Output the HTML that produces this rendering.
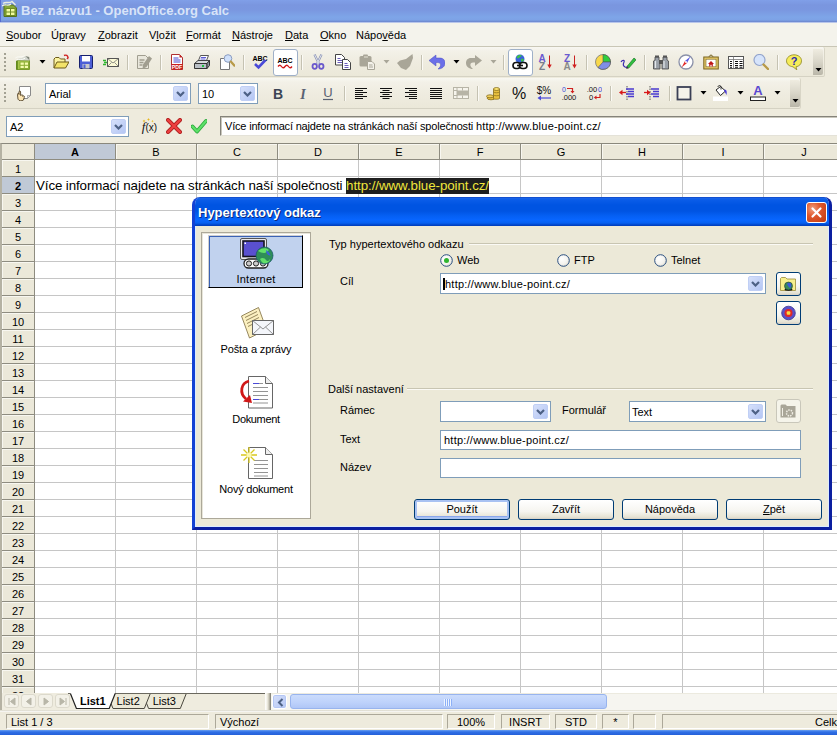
<!DOCTYPE html>
<html><head><meta charset="utf-8"><title>Bez názvu1 - OpenOffice.org Calc</title>
<style>
*{box-sizing:border-box;margin:0;padding:0}
html,body{width:837px;height:735px;overflow:hidden;background:#eeebdd;font-family:"Liberation Sans",sans-serif;font-size:11px;color:#000}
.a{position:absolute}
.t{position:absolute;white-space:nowrap;line-height:13px}
#title{left:0;top:0;width:837px;height:22px;background:linear-gradient(#809fe8 0,#7a96df 5px,#7a97e0 10px,#7ea5e8 17px,#7da2e6 20px,#6b84cc 22px)}
#title .t{left:21px;top:3px;font-size:13px;font-weight:bold;color:#d8e4f8;line-height:16px}
#menubar{left:0;top:22px;width:837px;height:24px;background:#f4f3ec;border-top:1px solid #b9c6ea}
#menubar .t{top:6px}#title:before{content:"";position:absolute;left:0;top:0;width:1px;height:22px;background:#566cd2}
u{text-decoration:underline}
.tb{background:linear-gradient(#f8f7f2 0,#f3f1e8 4px,#efece0 50%,#ebe8d9 100%);border-bottom:1px solid #d5d2c3;border-right:1px solid #d8d5c6;border-radius:0 2px 2px 0}
.ovf{background:linear-gradient(#efece0 0,#d8d5c8 50%,#b9b6a8 100%);border-radius:0 2px 2px 0}
.sep{width:1px;height:15px;background:#c5c2b2;box-shadow:1px 0 0 #fbfaf5}
.hdl{width:3px;height:19px;background:repeating-linear-gradient(180deg,#a3a193 0,#a3a193 2px,transparent 2px,transparent 4px);box-shadow:none}
.frm{background:#fff;border:1px solid #9fb0c8;border-radius:3px}
.combo{background:#fff;border:1px solid #7f9db9}
.cbtn{width:15px;background:linear-gradient(135deg,#d6e0fa,#b4c6f4);border:1px solid #c0cff5;border-radius:2px}
#finput{left:220px;top:116px;width:620px;height:20px;background:#fff;border:1px solid #85837a;border-bottom-color:#e4e2d8;box-shadow:inset 1px 1px 0 #c9c7bc}
#gridframe{left:0;top:143px;width:837px;height:567px;border-top:1px solid #8a887c;border-left:2px solid #8a887c;border-left-color:#b5b2a3}
#grid{left:2px;top:144px;width:835px;height:549px;overflow:hidden;background:#fff}
.ch{position:absolute;top:0;width:81px;height:16px;background:#ebe8d9;border-right:1px solid #8e8c80;border-bottom:1px solid #8e8c80;text-align:center;font-size:11px;line-height:17px;box-shadow:inset 1px 1px 0 #f8f7f0}
.rh{position:absolute;left:0;width:33px;height:17px;background:#ebe8d9;border-right:1px solid #8e8c80;border-bottom:1px solid #8e8c80;text-align:center;font-size:11px;line-height:19px;box-shadow:inset 1px 1px 0 #f8f7f0}
.ch.sel,.rh.sel{background:#c0c9d6;font-weight:bold;box-shadow:none}
#corner{left:0;top:0;width:33px;height:16px;background:#ebe8d9;border-right:1px solid #8e8c80;border-bottom:1px solid #8e8c80}
#cells{left:33px;top:16px;width:802px;height:533px;background:
 repeating-linear-gradient(90deg,transparent 0,transparent 80px,#c6c6c6 80px,#c6c6c6 81px),
 repeating-linear-gradient(180deg,transparent 0,transparent 16px,#c6c6c6 16px,#c6c6c6 17px),#fff}
#celltext{left:1px;top:18px;font-size:13.33px;line-height:16px;font-family:"Liberation Sans",sans-serif}
#celltext i{font-style:normal;letter-spacing:-0.105px}#celltext span{letter-spacing:-0.06px;background:#1e1e1e;color:#f0e63c;display:inline-block;height:16px}
#tabbar{left:2px;top:693px;width:264px;height:17px;background:#efecdf}
.navb{top:694px;width:15px;height:14px;border:1px solid #dcd9cc;border-radius:3px;background:#f3f1e8}
#split{left:265px;top:693px;width:6px;height:17px;background:linear-gradient(90deg,#fff 0,#f4f2e8 2px,#c8c5b6 4px,#77756a 6px)}
#hscroll{left:271px;top:693px;width:566px;height:17px;background:#f6f5f0;border-top:1px solid #eceadf}
#sbl{left:272px;top:694px;width:15px;height:15px;background:linear-gradient(135deg,#d6e0fa,#b4c6f4);border:1px solid #fff;border-radius:3px;box-shadow:0 0 0 1px #b4c6f4 inset}
#thumb{left:290px;top:694px;width:317px;height:15px;background:linear-gradient(#cbdcfc 0,#bdd1fb 60%,#b0c6f6 100%);border:1px solid #98b4ee;border-radius:3px}
.sf{top:714px;height:15px;padding-top:1px;border:1px solid;border-color:#aca899 #fff #fff #aca899;font-size:11px;line-height:13px;white-space:nowrap;overflow:hidden}
#bluebar{left:0;top:730px;width:837px;height:5px;background:linear-gradient(#6aa0f0 0,#2f6fe6 2px,#2560d8)}
#wline{left:0;top:710px;width:837px;height:2px;background:linear-gradient(#d8d5c6,#fff)}
#dlg{left:192px;top:197px;width:640px;height:333px;background:#ece9d8;border:3px solid #0c1fa0;border-left-color:#1442d4;border-top:none;border-radius:8px 8px 0 0;box-shadow:inset 1px 0 0 #dcecff,inset -1px 0 0 #dcecff,inset 0 -1px 0 #dcecff;overflow:hidden}
#dtitle{left:-3px;top:0;width:640px;height:29px;border-radius:7px 7px 0 0;background:linear-gradient(#0a3cb8 0,#1a64e8 1px,#0a5ce8 3px,#0054e2 8px,#0054e2 14px,#0560f4 19px,#0866ff 23px,#0660f0 26px,#0044c8 28px,#003cb8 29px)}
#dtt{left:6px;top:8px;font-size:13px;font-weight:bold;color:#fff;line-height:16px;text-shadow:1px 1px 0 #0a2a80}
#dclose{left:614px;top:5px;width:21px;height:21px;border:1px solid #fff;border-radius:3px;background:radial-gradient(circle at 30% 30%,#f0a080 0,#e0582c 40%,#c03a10 100%)}
#lpanel{left:201px;top:232px;width:110px;height:287px;background:#fff;border:1px solid #aca899;box-shadow:inset 1px 1px 0 #e8e6da}
#selitem{left:208px;top:235px;width:95px;height:53px;background:#c1d2ee;border:1px solid;border-color:#d0d0d0 #000 #000 #d0d0d0;box-shadow:inset 1px 1px 0 #3a62b4}
.gl{height:1px;background:#c8c5b2;box-shadow:0 1px 0 #fbfaf5}
.xbtn{border:1px solid #003c74;border-radius:3px;background:linear-gradient(#fff 0,#f6f5f0 60%,#e6e3d4 90%,#d6d0c5 100%)}
.xbtn.dis{border-color:#c9c7ba;background:#f5f4ea}
.url{letter-spacing:.23px}
.xbtn.dflt{box-shadow:inset 0 0 0 2px #a9c2f2,inset 0 -3px 0 #8aa6ec}

</style></head><body>
<div class="a" id="title"><svg class="a" style="left:2px;top:0px" width="16" height="17" viewBox="0 0 16 17"><path d="M2 5h9.500l3 3v8.500H2z" fill="#86a838" stroke="#55701c"/><path d="M1 3.500c3-2.500 6 .5 9-2l3.500 3.500" fill="none" stroke="#e8ece0" stroke-width="1.600"/><path d="M0 6c3-2.500 6 .5 9-2" fill="none" stroke="#f4f6f0" stroke-width="1.200"/><rect x="4" y="8.500" width="9" height="7" fill="#f2fca0" stroke="#6f8c24"/><path d="M4 12h9M8.500 8.500v7" stroke="#6f8c24"/></svg><div class="t">Bez názvu1 - OpenOffice.org Calc</div></div>
<div class="a" id="menubar">
<div class="t" style="left:6px"><u>S</u>oubor</div>
<div class="t" style="left:51px">Ú<u>p</u>ravy</div>
<div class="t" style="left:98px"><u>Z</u>obrazit</div>
<div class="t" style="left:149px">V<u>l</u>ožit</div>
<div class="t" style="left:186px"><u>F</u>ormát</div>
<div class="t" style="left:232px"><u>N</u>ástroje</div>
<div class="t" style="left:285px"><u>D</u>ata</div>
<div class="t" style="left:320px"><u>O</u>kno</div>
<div class="t" style="left:356px">Nápo<u>v</u>ěda</div>
</div>
<div class="a" style="left:0;top:46px;width:837px;height:1px;background:#c9c6b6"></div><div class="a tb" style="left:0;top:47px;width:825px;height:30px"></div>
<div class="a tb" style="left:0;top:78px;width:801px;height:31px"></div>
<div class="a ovf" style="left:813px;top:49px;width:10px;height:26px"></div>
<div class="a ovf" style="left:790px;top:80px;width:10px;height:27px"></div>
<svg class="a" style="left:815px;top:68px" width="7" height="4" viewBox="0 0 7 4"><path d="M0.500 0h6L3.500 3.500z" fill="#000"/></svg>
<svg class="a" style="left:792px;top:99px" width="7" height="4" viewBox="0 0 7 4"><path d="M0.500 0h6L3.500 3.500z" fill="#000"/></svg>
<div class="a hdl" style="left:4px;top:53px;width:2px;height:18px"></div>
<div class="a hdl" style="left:4px;top:84px;width:2px;height:18px"></div>
<div class="a frm" style="left:273px;top:49px;width:25px;height:27px"></div>
<div class="a frm" style="left:508px;top:49px;width:25px;height:27px"></div>
<svg class="a" style="left:15px;top:54px" width="16" height="16" viewBox="0 0 16 16"><path d="M1.500 6.500h13v9h-13z" fill="#a9c84e" stroke="#7a9a2c"/><path d="M2 6.500v9" stroke="#5f861c" stroke-width="1.600"/><path d="M1.500 6.300C4 2.500 7 5.500 10.500 2l4 4.500z" fill="#d4d7cf"/><path d="M10.500 2l4 4.500-.3-3.500z" fill="#7f857a"/><path d="M.5 4c3-2.500 5.500.5 9-2.500M1 6.300c3-2.500 5.500.5 9-2" fill="none" stroke="#fbfcf8" stroke-width="1"/><rect x="5" y="8" width="8.500" height="6.500" fill="#f4fcae" stroke="#8aac32"/><path d="M5 11.300h8.500M9.300 8v6.500" stroke="#8aac32"/></svg>
<svg class="a" style="left:53px;top:54px" width="16" height="16" viewBox="0 0 16 16"><path d="M11 1.5c2-1 4 0 4 2.5" fill="none" stroke="#d02020" stroke-width="1.4"/><path d="M13.3 4.5l1.8 1 .6-2.3z" fill="#d02020"/><path d="M1 14V5l1.5-1.5h3.5L7.5 5H12v3" fill="#fbf3a0" stroke="#6d5b1a"/><path d="M1 14l3-6h12l-3.5 6z" fill="#f3e36a" stroke="#6d5b1a"/></svg>
<svg class="a" style="left:78px;top:54px" width="16" height="16" viewBox="0 0 16 16"><rect x="1.5" y="1.5" width="13" height="13" rx="1" fill="#4d5fd6" stroke="#16206e"/><rect x="4" y="2" width="8" height="5.5" fill="#fff"/><rect x="4.5" y="10" width="7" height="4.5" fill="#c8c8c8"/><rect x="5.5" y="10.5" width="2" height="3.5" fill="#4d5fd6"/></svg>
<svg class="a" style="left:103px;top:54px" width="16" height="16" viewBox="0 0 16 16"><rect x="4.5" y="4.5" width="11" height="8" fill="#fdfbd8" stroke="#555"/><path d="M4.5 4.5l5.5 4.5 5.5-4.5M4.5 12.5l4-4M15.5 12.5l-4-4" fill="none" stroke="#777" stroke-width=".8"/><path d="M0 6.5h3M1 8.5h3M0 10.5h3" stroke="#2fb52f" stroke-width="1.4"/></svg>
<svg class="a" style="left:136px;top:54px" width="16" height="16" viewBox="0 0 16 16"><path d="M1.500 1.500h8l3 3v10h-11z" fill="#e9e7dc" stroke="#a19e90"/><path d="M3.500 6h5M3.500 8.500h4M3.500 11h3" stroke="#a19e90" stroke-width="1.300"/><path d="M13 2l3 2.500-5.500 8.500-4 2 .5-4.500z" fill="#a19e90"/></svg>
<svg class="a" style="left:169px;top:54px" width="16" height="16" viewBox="0 0 16 16"><path d="M2.5 .5h8l3 3v12h-11z" fill="#fff" stroke="#b03030"/><path d="M10.5.5v3h3z" fill="#c02020"/><path d="M4.5 4h5M4.5 6h7M4.5 8h7" stroke="#4a4ad0" stroke-width="1.1"/><rect x="2.5" y="10" width="11" height="5.5" fill="#c81e1e"/><text x="8" y="14.6" font-size="5.2" font-weight="bold" fill="#fff" text-anchor="middle" font-family="Liberation Sans,sans-serif">PDF</text></svg>
<svg class="a" style="left:194px;top:54px" width="16" height="16" viewBox="0 0 16 16"><path d="M4.500 6.500l2-5h8l-2 5z" fill="#fff" stroke="#555"/><path d="M7 3.500h5M6.500 5h5" stroke="#4a4ad0" stroke-width=".9"/><path d="M.5 9.500l3.500-3h11.500l-2.500 3z" fill="#d6d9dc" stroke="#444"/><path d="M.5 9.500h12.500v5H.5z" fill="#b9bfc5" stroke="#333"/><path d="M13 9.500l2.500-3v5l-2.500 3z" fill="#8e959c" stroke="#333"/><rect x="8" y="11" width="2" height="2" fill="#1fbf3f"/></svg>
<svg class="a" style="left:219px;top:54px" width="16" height="16" viewBox="0 0 16 16"><path d="M1.500 4.500h7l2 2v9h-9z" fill="#fff" stroke="#777"/><circle cx="9" cy="4.500" r="3.800" fill="#cfe0fa" stroke="#8a9cc0"/><path d="M11.800 7.500l3.700 4.200" stroke="#b89a48" stroke-width="2.200" stroke-linecap="round"/></svg>
<svg class="a" style="left:252px;top:54px" width="16" height="16" viewBox="0 0 16 16"><text x="8" y="6.500" font-size="7" font-weight="bold" text-anchor="middle" font-family="Liberation Sans,sans-serif">ABC</text><path d="M3 10l3.500 3.500 7-7.500" fill="none" stroke="#4a4ad8" stroke-width="2.600"/></svg>
<svg class="a" style="left:277px;top:54px" width="16" height="16" viewBox="0 0 16 16"><text x="8" y="8.500" font-size="7" font-weight="bold" text-anchor="middle" font-family="Liberation Sans,sans-serif">ABC</text><path d="M1 12.500q1.800-2.500 3.500 0t3.500 0 3.500 0 3.500 0" fill="none" stroke="#d01818" stroke-width="1.300"/></svg>
<svg class="a" style="left:310px;top:54px" width="16" height="16" viewBox="0 0 16 16"><path d="M4.500 .5L9 10M11.500 .5L7 10" stroke="#8a92b0" stroke-width="2.200"/><path d="M4.500 .5L9 10M11.500 .5L7 10" stroke="#dfe3f0" stroke-width="1"/><ellipse cx="4.700" cy="12.300" rx="2.200" ry="2.500" fill="none" stroke="#6a58cc" stroke-width="1.800"/><ellipse cx="11.300" cy="12.300" rx="2.200" ry="2.500" fill="none" stroke="#6a58cc" stroke-width="1.800"/></svg>
<svg class="a" style="left:335px;top:54px" width="16" height="16" viewBox="0 0 16 16"><path d="M.5 .5h6l3 3v7.500h-9z" fill="#fff" stroke="#444"/><path d="M2.500 4.500h3M2.500 6.500h5M2.500 8.500h5" stroke="#5a4ab0" stroke-width=".9"/><path d="M7.500 5.500h5l3 3v7h-8z" fill="#fff" stroke="#444"/><path d="M9.500 9.500h3M9.500 11.500h4M9.500 13.500h4" stroke="#5a4ab0" stroke-width=".9"/></svg>
<svg class="a" style="left:359px;top:54px" width="16" height="16" viewBox="0 0 16 16"><rect x=".5" y="2" width="12" height="10.500" rx="1.500" fill="#a9a698"/><rect x="4" y=".5" width="5" height="3" rx="1" fill="#a9a698"/><path d="M5 3h4" stroke="#e6e3d6"/><path d="M8.500 7.500h4.500l2.500 2.500v5.500h-7z" fill="#f4f2ea" stroke="#a9a698"/><path d="M10 11h3.500M10 13h4" stroke="#a9a698"/></svg>
<svg class="a" style="left:397px;top:54px" width="16" height="16" viewBox="0 0 16 16"><path d="M15.500 0L16 4 13 12 9 16 4 14 0 9 3 6.500 9 5Z" fill="#a9a698"/></svg>
<svg class="a" style="left:429px;top:54px" width="16" height="16" viewBox="0 0 16 16"><path d="M0 6.500L7 1V4H11C14.500 4 16 6.500 16 9 16 12.500 13 15 9 15 11 13.500 12 11.500 11.500 10 11 8.800 10 8.500 7 8.500V12Z" fill="#6b6fe8" stroke="#4a4cc0" stroke-width=".5"/></svg>
<svg class="a" style="left:466px;top:54px" width="16" height="16" viewBox="0 0 16 16"><path d="M16 6.500L9 1V4H5C1.500 4 0 6.500 0 9 0 12.500 3 15 7 15 5 13.500 4 11.500 4.500 10 5 8.800 6 8.500 9 8.500V12Z" fill="#a9a698"/></svg>
<svg class="a" style="left:512px;top:54px" width="16" height="16" viewBox="0 0 16 16"><circle cx="8" cy="5" r="4.500" fill="#3a64d8"/><path d="M4.500 3c1.500-2.500 4-2.500 5.500-1.500-1 1.500-2 1-3 2.500-1 1-2 0-2.500-1z" fill="#3ec04a"/><path d="M9 5c1-.5 2.500 0 3 1-.5 1.500-2 2-3 1.500z" fill="#3ec04a"/><rect x="1" y="8.500" width="7.500" height="6" rx="3" fill="#fff" stroke="#111" stroke-width="1.600"/><rect x="7.500" y="8.500" width="7.500" height="6" rx="3" fill="#fff" stroke="#111" stroke-width="1.600"/><path d="M5 11.500h6" stroke="#111" stroke-width="1.600"/><path d="M6.500 9.800l2 1.700-2 1.700M9.500 9.800l-2 1.700" fill="none" stroke="#111" stroke-width=".8"/></svg>
<svg class="a" style="left:537px;top:54px" width="16" height="16" viewBox="0 0 16 16"><text x="5" y="8" font-size="10" font-weight="bold" fill="#6a5ad0" text-anchor="middle" font-family="Liberation Sans,sans-serif">A</text><text x="5" y="16" font-size="10" font-weight="bold" fill="#7a7f8c" text-anchor="middle" font-family="Liberation Sans,sans-serif">Z</text><path d="M12.500 1.500v10" stroke="#c82020" stroke-width="1"/><path d="M10.300 10.500h4.400l-2.200 4z" fill="#d02020"/></svg>
<svg class="a" style="left:562px;top:54px" width="16" height="16" viewBox="0 0 16 16"><text x="5" y="8" font-size="10" font-weight="bold" fill="#6a5ad0" text-anchor="middle" font-family="Liberation Sans,sans-serif">Z</text><text x="5" y="16" font-size="10" font-weight="bold" fill="#8a8a8a" text-anchor="middle" font-family="Liberation Sans,sans-serif">A</text><path d="M12.500 1.500v10" stroke="#c82020" stroke-width="1"/><path d="M10.300 10.500h4.400l-2.200 4z" fill="#d02020"/></svg>
<svg class="a" style="left:595px;top:54px" width="16" height="16" viewBox="0 0 16 16"><circle cx="8" cy="8" r="7.500" fill="#f8d84a" stroke="#777" stroke-width=".8"/><path d="M8 8V.5A7.500 7.500 0 0 1 15.500 8z" fill="#2fcf3f" stroke="#555" stroke-width=".6"/><path d="M8 8h7.500A7.500 7.500 0 0 1 3 13.500z" fill="#7f8ee8" stroke="#555" stroke-width=".6"/></svg>
<svg class="a" style="left:620px;top:54px" width="16" height="16" viewBox="0 0 16 16"><path d="M1 8c1.500-2.500 4-2 3 0s-1 4 1 5 3-.5 3.500-1.500" fill="none" stroke="#3a2ab0" stroke-width="1.200"/><path d="M7 12.500L14 4l2 1.800-7.200 8.200z" fill="#2fbf3f" stroke="#1d7a2a" stroke-width=".7"/><path d="M7 12.500l-.8 2.500 2.600-.8z" fill="#333"/></svg>
<svg class="a" style="left:653px;top:54px" width="16" height="16" viewBox="0 0 16 16"><path d="M2 3h4v3l1 1v8H.5V7L2 6z" fill="#9aa0a8" stroke="#444" stroke-width=".8"/><path d="M10 3h4v3l1.500 1v8H9V7l1-1z" fill="#9aa0a8" stroke="#444" stroke-width=".8"/><rect x="6" y="6" width="4" height="4" fill="#555"/><path d="M2.500 7v7M11 7v7" stroke="#e4e8ec" stroke-width="1.200"/><rect x="2" y="1.500" width="4" height="2" fill="#555"/><rect x="10" y="1.500" width="4" height="2" fill="#555"/></svg>
<svg class="a" style="left:678px;top:54px" width="16" height="16" viewBox="0 0 16 16"><circle cx="8" cy="8" r="7" fill="#fff" stroke="#8a90a8" stroke-width="1.300"/><path d="M12.500 2.500L9 9 7 7z" fill="#5a5ae0"/><path d="M3.500 13.500L7 7l2 2z" fill="#e02828"/><circle cx="8" cy="8" r="1" fill="#fff"/></svg>
<svg class="a" style="left:703px;top:54px" width="16" height="16" viewBox="0 0 16 16"><path d="M5.500 3L8 .8 10.500 3" fill="none" stroke="#6d5b1a"/><rect x=".8" y="3" width="14.500" height="12" fill="#e2c666" stroke="#7a6420"/><rect x="3" y="5.200" width="10" height="7.600" fill="#fff" stroke="#7a6420" stroke-width=".6"/><path d="M5 10l3-3 3 3z" fill="#c01818"/><rect x="6.200" y="10" width="3.600" height="2.500" fill="#c01818"/><rect x="7.400" y="10.800" width="1.200" height="1.700" fill="#fff"/></svg>
<svg class="a" style="left:728px;top:54px" width="16" height="16" viewBox="0 0 16 16"><rect x=".5" y="2.500" width="15" height="12" fill="#fff" stroke="#555"/><path d="M.5 5.500h15M5.500 2.500v12" stroke="#777" stroke-width=".8"/><path d="M2 7.500h2M2 9.500h2M2 11.500h2M2 13.200h2M7 7.500h3M7 9.500h3M7 11.500h3M7 13.200h3M11.500 7.500h3M11.500 9.500h3M11.500 11.500h3M11.500 13.200h3" stroke="#111" stroke-width="1.100"/></svg>
<svg class="a" style="left:753px;top:54px" width="16" height="16" viewBox="0 0 16 16"><circle cx="6.500" cy="6" r="5.500" fill="#d6e4fb" stroke="#93a4cc" stroke-width="1.200"/><path d="M10.500 10.500l4.500 4.500" stroke="#b89a48" stroke-width="2.400" stroke-linecap="round"/></svg>
<svg class="a" style="left:786px;top:54px" width="16" height="16" viewBox="0 0 16 16"><path d="M8 .8c4.200 0 7.500 2.500 7.500 6s-2.500 5.500-5.500 6l.8 3-3.800-3C3 12.300.5 10 .5 6.800S3.800.8 8 .8z" fill="#f6ec5a" stroke="#8a8420" stroke-width=".8"/><text x="8" y="11" font-size="11" font-weight="bold" fill="#2a2ab0" text-anchor="middle" font-family="Liberation Sans,sans-serif">?</text></svg>
<div class="a sep" style="left:127px;top:55px"></div>
<div class="a sep" style="left:160px;top:55px"></div>
<div class="a sep" style="left:243px;top:55px"></div>
<div class="a sep" style="left:301px;top:55px"></div>
<div class="a sep" style="left:421px;top:55px"></div>
<div class="a sep" style="left:503px;top:55px"></div>
<div class="a sep" style="left:586px;top:55px"></div>
<div class="a sep" style="left:644px;top:55px"></div>
<div class="a sep" style="left:777px;top:55px"></div>
<svg class="a" style="left:38.5px;top:60px" width="7" height="4" viewBox="0 0 7 4"><path d="M0.500 0h6L3.500 3.500z" fill="#000"/></svg>
<svg class="a" style="left:382.5px;top:60px" width="7" height="4" viewBox="0 0 7 4"><path d="M0.500 0h6L3.500 3.500z" fill="#a9a698"/></svg>
<svg class="a" style="left:452.5px;top:60px" width="7" height="4" viewBox="0 0 7 4"><path d="M0.500 0h6L3.500 3.500z" fill="#000"/></svg>
<svg class="a" style="left:489.5px;top:60px" width="7" height="4" viewBox="0 0 7 4"><path d="M0.500 0h6L3.500 3.500z" fill="#a9a698"/></svg>
<svg class="a" style="left:16px;top:85px" width="16" height="16" viewBox="0 0 16 16"><path d="M3.500 1.500h11v9l-3 3h-8z" fill="#fff" stroke="#8a8a8a"/><path d="M14.500 10.500h-3v3z" fill="#e4e4e4" stroke="#8a8a8a" stroke-width=".6"/><path d="M1.500 9.500c0-1.600 1.500-1.600 1.500 0V7c0-1.400 1.600-1.400 1.600 0v3.500l.9-.5c1-.6 1.800.4 1.100 1.300l.9-.3c1-.2 1.500.9.700 1.600L7.500 15c-1.500 1.300-4.500 1-5.500-.8z" fill="#fde6b4" stroke="#3a2a10" stroke-width=".8"/></svg>
<svg class="a" style="left:270px;top:85px" width="16" height="16" viewBox="0 0 16 16"><text x="8" y="13.500" font-size="14" font-weight="bold" fill="#3c4454" text-anchor="middle" font-family="Liberation Sans,sans-serif">B</text></svg>
<svg class="a" style="left:295px;top:85px" width="16" height="16" viewBox="0 0 16 16"><text x="8" y="13.500" font-size="14" font-style="italic" font-weight="bold" fill="#5a6272" text-anchor="middle" font-family="Liberation Serif,serif">I</text></svg>
<svg class="a" style="left:320px;top:85px" width="16" height="16" viewBox="0 0 16 16"><text x="8" y="12" font-size="13" fill="#5a6272" text-anchor="middle" font-family="Liberation Sans,sans-serif">U</text><path d="M3 14.500h10" stroke="#5a6272" stroke-width="1.200"/></svg>
<svg class="a" style="left:353px;top:85px" width="16" height="16" viewBox="0 0 16 16"><path d="M2 3.5h12M2 5.5h8M2 7.5h12M2 9.5h8M2 11.5h12M2 13.5h8" stroke="#111" stroke-width="1"/></svg>
<svg class="a" style="left:378px;top:85px" width="16" height="16" viewBox="0 0 16 16"><path d="M2.0 3.5h12M4.5 5.5h7M2.0 7.5h12M4.5 9.5h7M2.0 11.5h12M4.5 13.5h7" stroke="#111" stroke-width="1"/></svg>
<svg class="a" style="left:403px;top:85px" width="16" height="16" viewBox="0 0 16 16"><path d="M2 3.5h12M6 5.5h8M2 7.5h12M6 9.5h8M2 11.5h12M6 13.5h8" stroke="#111" stroke-width="1"/></svg>
<svg class="a" style="left:428px;top:85px" width="16" height="16" viewBox="0 0 16 16"><path d="M2 3.5h12M2 5.5h12M2 7.5h12M2 9.5h12M2 11.5h12M2 13.5h12" stroke="#111" stroke-width="1"/></svg>
<svg class="a" style="left:453px;top:85px" width="16" height="16" viewBox="0 0 16 16"><rect x=".5" y="2.500" width="15" height="11" fill="#f6f4ec" stroke="#b7b4a6"/><rect x="4" y="5.500" width="11" height="5" fill="#b7b4a6"/><path d="M4 2.500v11M.5 5.500h4M.5 10.500h4M9.500 2.500v3M9.500 10.500v3" stroke="#b7b4a6"/></svg>
<svg class="a" style="left:486px;top:85px" width="16" height="16" viewBox="0 0 16 16"><ellipse cx="5" cy="13" rx="4" ry="1.800" fill="#e8c040" stroke="#7a6010" stroke-width=".7"/><ellipse cx="4" cy="11.300" rx="3.500" ry="1.500" fill="#f0d060" stroke="#7a6010" stroke-width=".7"/><path d="M7.500 4v9.500c0 1 5.500 1 6 0V4z" fill="#e8c040" stroke="#7a6010" stroke-width=".7"/><ellipse cx="10.500" cy="4" rx="3" ry="1.500" fill="#f8e070" stroke="#7a6010" stroke-width=".7"/><path d="M7.500 7c1 1 5 1 6 0M7.500 10c1 1 5 1 6 0" fill="none" stroke="#7a6010" stroke-width=".6"/></svg>
<svg class="a" style="left:511px;top:85px" width="16" height="16" viewBox="0 0 16 16"><text x="8" y="14" font-size="16" fill="#111" text-anchor="middle" font-family="Liberation Sans,sans-serif">%</text></svg>
<svg class="a" style="left:536px;top:85px" width="16" height="16" viewBox="0 0 16 16"><text x="8" y="8.500" font-size="10" fill="#111" text-anchor="middle" font-family="Liberation Sans,sans-serif">$%</text><path d="M4 13h11" stroke="#4a4ad8" stroke-width="1.200"/><path d="M1.500 13l3.500-2.500v5z" fill="#4a4ad8"/></svg>
<svg class="a" style="left:561px;top:85px" width="16" height="16" viewBox="0 0 16 16"><text x="3" y="6.500" font-size="7" fill="#3a4ad8" text-anchor="middle" font-family="Liberation Sans,sans-serif">0</text><path d="M6 3.500h5.500v3" fill="none" stroke="#d02020" stroke-width="1.200"/><path d="M9.500 6h4l-2 2.500z" fill="#d02020"/><text x="8" y="15" font-size="7.500" fill="#111" text-anchor="middle" font-family="Liberation Sans,sans-serif">.000</text></svg>
<svg class="a" style="left:586px;top:85px" width="16" height="16" viewBox="0 0 16 16"><text x="6" y="6.500" font-size="7.500" fill="#111" text-anchor="middle" font-family="Liberation Sans,sans-serif">.00</text><text x="14" y="6.500" font-size="7.500" fill="#3a4ad8" text-anchor="middle" font-family="Liberation Sans,sans-serif">0</text><text x="5" y="15" font-size="7.500" fill="#111" text-anchor="middle" font-family="Liberation Sans,sans-serif">0</text><path d="M14 9v3.500h-4" fill="none" stroke="#d02020" stroke-width="1.200"/><path d="M10.500 10.500v4l-2.700-2z" fill="#d02020"/></svg>
<svg class="a" style="left:619px;top:85px" width="16" height="16" viewBox="0 0 16 16"><path d="M8 1v14" stroke="#333" stroke-width=".8" stroke-dasharray="1.500 1"/><path d="M7 4h8M9 6.500h6M7 9h8M9 11.500h6" stroke="#4a3ad0" stroke-width="1.400"/><path d="M2 7.500h5" stroke="#d81818" stroke-width="1.300"/><path d="M0 7.500l3.500-2.800v5.600z" fill="#d81818"/></svg>
<svg class="a" style="left:644px;top:85px" width="16" height="16" viewBox="0 0 16 16"><path d="M6 1v14" stroke="#333" stroke-width=".8" stroke-dasharray="1.500 1"/><path d="M7 4h8M9 6.500h6M7 9h8M9 11.500h6" stroke="#4a3ad0" stroke-width="1.400"/><path d="M0 7.500h4" stroke="#d81818" stroke-width="1.300"/><path d="M6.500 7.500L3 4.700v5.600z" fill="#d81818"/></svg>
<svg class="a" style="left:676px;top:85px" width="16" height="16" viewBox="0 0 16 16"><rect x="1.500" y="2" width="13" height="12.500" fill="#f4f2ea" stroke="#3a3f55" stroke-width="1.800"/></svg>
<svg class="a" style="left:713px;top:85px" width="16" height="16" viewBox="0 0 16 16"><rect x="0" y="11.500" width="15" height="4.500" fill="#fff"/><path d="M3 5l4.500-3.500 5 4.500-5 4.500z" fill="#fff" stroke="#222" stroke-width="1"/><path d="M5 2c0-2 3-2 3 0v2.500" fill="none" stroke="#222" stroke-width=".9"/><path d="M11.500 4.500c2.500 0 2.500 3 2 5.500-1-1.500-1.500-3-2.500-4.500z" fill="#4a3ad8"/></svg>
<svg class="a" style="left:750px;top:85px" width="16" height="16" viewBox="0 0 16 16"><text x="8" y="10" font-size="13" font-weight="bold" fill="#5a48d0" text-anchor="middle" font-family="Liberation Sans,sans-serif">A</text><rect x=".5" y="12" width="15" height="3.500" fill="#fff" stroke="#222"/></svg>
<div class="a sep" style="left:344px;top:86px"></div>
<div class="a sep" style="left:477px;top:86px"></div>
<div class="a sep" style="left:610px;top:86px"></div>
<div class="a sep" style="left:669px;top:86px"></div>
<svg class="a" style="left:699.5px;top:91px" width="7" height="4" viewBox="0 0 7 4"><path d="M0.500 0h6L3.500 3.500z" fill="#000"/></svg>
<svg class="a" style="left:736.5px;top:91px" width="7" height="4" viewBox="0 0 7 4"><path d="M0.500 0h6L3.500 3.500z" fill="#000"/></svg>
<svg class="a" style="left:773.5px;top:91px" width="7" height="4" viewBox="0 0 7 4"><path d="M0.500 0h6L3.500 3.500z" fill="#000"/></svg>
<div class="a combo" style="left:45px;top:83px;width:146px;height:21px"><div class="t" style="left:3px;top:4px">Arial</div><div class="a cbtn" style="right:2px;top:2px;height:15px"><svg width="9" height="6" viewBox="0 0 9 6" style="position:absolute;left:2px;top:4px"><path d="M1 1l3.500 3.500L8 1" fill="none" stroke="#4d6185" stroke-width="2.200"/></svg></div></div>
<div class="a combo" style="left:198px;top:83px;width:60px;height:21px"><div class="t" style="left:3px;top:4px">10</div><div class="a cbtn" style="right:2px;top:2px;height:15px"><svg width="9" height="6" viewBox="0 0 9 6" style="position:absolute;left:2px;top:4px"><path d="M1 1l3.500 3.500L8 1" fill="none" stroke="#4d6185" stroke-width="2.200"/></svg></div></div>
<div class="a combo" style="left:6px;top:116px;width:123px;height:21px"><div class="t" style="left:3px;top:4px">A2</div><div class="a cbtn" style="right:2px;top:2px;height:15px"><svg width="9" height="6" viewBox="0 0 9 6" style="position:absolute;left:2px;top:4px"><path d="M1 1l3.500 3.500L8 1" fill="none" stroke="#4d6185" stroke-width="2.200"/></svg></div></div>
<svg class="a" style="left:141px;top:118px" width="16" height="16" viewBox="0 0 16 16"><text x="8.500" y="13" font-size="10" fill="#111" text-anchor="middle" font-family="Liberation Sans,sans-serif"><tspan font-style="italic" font-size="13" font-family="Liberation Serif,serif">f</tspan>(x)</text><path d="M3 1.500l.5 1 1 .5-1 .5-.5 1-.5-1-1-.5 1-.5zM7.500 0l.5 1 1 .5-1 .5-.5 1-.5-1-1-.5 1-.5zM11.500 2l.4.800.8.400-.8.400-.4.800-.4-.8-.8-.4.800-.4z" fill="#e8b820"/></svg>
<svg class="a" style="left:166px;top:118px" width="16" height="16" viewBox="0 0 16 16"><path d="M2 2l12 12M14 2L2 14" stroke="#b02020" stroke-width="4" stroke-linecap="round"/><path d="M2 2l12 12M14 2L2 14" stroke="#ee4040" stroke-width="2.400" stroke-linecap="round"/></svg>
<svg class="a" style="left:191px;top:118px" width="16" height="16" viewBox="0 0 16 16"><path d="M1.500 8.500l4.500 5 9-10.500" fill="none" stroke="#2aa83a" stroke-width="3.800" stroke-linejoin="round" stroke-linecap="round"/><path d="M1.500 8.500l4.500 5 9-10.500" fill="none" stroke="#5ce068" stroke-width="2.200" stroke-linejoin="round" stroke-linecap="round"/></svg>
<div class="a" id="finput"><div class="t" style="left:4px;top:3px"><span style="letter-spacing:-.18px">Více informací najdete na stránkách naší společnosti </span><span class="url">http://www.blue-point.cz/</span></div></div>
<div class="a" id="gridframe"></div><div class="a" id="grid">
<div class="ch sel" style="left:33px">A</div>
<div class="ch" style="left:114px">B</div>
<div class="ch" style="left:195px">C</div>
<div class="ch" style="left:276px">D</div>
<div class="ch" style="left:357px">E</div>
<div class="ch" style="left:438px">F</div>
<div class="ch" style="left:519px">G</div>
<div class="ch" style="left:600px">H</div>
<div class="ch" style="left:681px">I</div>
<div class="ch" style="left:762px">J</div>
<div class="rh" style="top:16px">1</div>
<div class="rh sel" style="top:33px">2</div>
<div class="rh" style="top:50px">3</div>
<div class="rh" style="top:67px">4</div>
<div class="rh" style="top:84px">5</div>
<div class="rh" style="top:101px">6</div>
<div class="rh" style="top:118px">7</div>
<div class="rh" style="top:135px">8</div>
<div class="rh" style="top:152px">9</div>
<div class="rh" style="top:169px">10</div>
<div class="rh" style="top:186px">11</div>
<div class="rh" style="top:203px">12</div>
<div class="rh" style="top:220px">13</div>
<div class="rh" style="top:237px">14</div>
<div class="rh" style="top:254px">15</div>
<div class="rh" style="top:271px">16</div>
<div class="rh" style="top:288px">17</div>
<div class="rh" style="top:305px">18</div>
<div class="rh" style="top:322px">19</div>
<div class="rh" style="top:339px">20</div>
<div class="rh" style="top:356px">21</div>
<div class="rh" style="top:373px">22</div>
<div class="rh" style="top:390px">23</div>
<div class="rh" style="top:407px">24</div>
<div class="rh" style="top:424px">25</div>
<div class="rh" style="top:441px">26</div>
<div class="rh" style="top:458px">27</div>
<div class="rh" style="top:475px">28</div>
<div class="rh" style="top:492px">29</div>
<div class="rh" style="top:509px">30</div>
<div class="rh" style="top:526px">31</div>
<div class="rh" style="top:543px">32</div>
<div class="a" id="corner"></div>
<div class="a" id="cells"><div class="t" id="celltext"><i>Více informací najdete na stránkách naší společnosti </i><span>http://www.blue-point.cz/</span></div></div>
</div>
<div class="a" id="tabbar"></div>
<div class="a navb" style="left:4px"><svg width="12" height="11" viewBox="0 0 12 11" style="position:absolute;left:1px;top:1px"><path d="M3 2v7M9 2L4.500 5.500 9 9z" fill="#b8b6a8" stroke="#b8b6a8" stroke-width="1"/></svg></div>
<div class="a navb" style="left:21px"><svg width="12" height="11" viewBox="0 0 12 11" style="position:absolute;left:1px;top:1px"><path d="M8 2L3.500 5.500 8 9z" fill="#b8b6a8" stroke="#b8b6a8" stroke-width="1"/></svg></div>
<div class="a navb" style="left:38px"><svg width="12" height="11" viewBox="0 0 12 11" style="position:absolute;left:1px;top:1px"><path d="M4 2l4.500 3.500L4 9z" fill="#b8b6a8" stroke="#b8b6a8" stroke-width="1"/></svg></div>
<div class="a navb" style="left:55px"><svg width="12" height="11" viewBox="0 0 12 11" style="position:absolute;left:1px;top:1px"><path d="M9 2v7M3 2l4.500 3.500L3 9z" fill="#b8b6a8" stroke="#b8b6a8" stroke-width="1"/></svg></div>
<svg class="a" style="left:68px;top:693px" width="200" height="17" viewBox="0 0 200 17">
<path d="M74.600 0.500l6 15h31.700l6-15z" fill="#ece9d8" stroke="#4a483f" stroke-width="1"/>
<path d="M39 0.500l6 15h31.300l6-15z" fill="#ece9d8" stroke="#4a483f" stroke-width="1"/>
<path d="M0 0.500h2.400M47.200 0.500h153" fill="none" stroke="#6a685e" stroke-width="1"/>
<path d="M2.400 0l6 15.500h32.800l6-15.500z" fill="#fff"/>
<path d="M2.400 0.500l6 15h32.800l6-15" fill="none" stroke="#222" stroke-width="1.200"/>
<text x="24.800" y="12.400" font-size="11" font-weight="bold" text-anchor="middle" font-family="Liberation Sans,sans-serif">List1</text>
<text x="60.200" y="12.400" font-size="11" text-anchor="middle" font-family="Liberation Sans,sans-serif">List2</text>
<text x="96.300" y="12.400" font-size="11" text-anchor="middle" font-family="Liberation Sans,sans-serif">List3</text>
</svg>
<div class="a" id="split"></div>
<div class="a" id="hscroll"></div>
<div class="a" id="sbl"><svg width="9" height="9" viewBox="0 0 9 9" style="position:absolute;left:3px;top:3px"><path d="M6.500 1L3 4.500 6.500 8" fill="none" stroke="#4d6185" stroke-width="2"/></svg></div>
<div class="a" id="thumb"><div class="a" style="left:153px;top:4px;width:8px;height:7px;background:repeating-linear-gradient(90deg,#eef4fe 0,#eef4fe 1px,#8cb0f8 1px,#8cb0f8 2px)"></div></div>
<div class="a sf" style="left:6px;width:203px;padding-left:4px;">List 1 / 3</div>
<div class="a sf" style="left:215px;width:228px;padding-left:4px;">Výchozí</div>
<div class="a sf" style="left:447px;width:48px;text-align:center;">100%</div>
<div class="a sf" style="left:501px;width:49px;text-align:center;">INSRT</div>
<div class="a sf" style="left:555px;width:42px;text-align:center;">STD</div>
<div class="a sf" style="left:602px;width:27px;text-align:center;">*</div>
<div class="a sf" style="left:633px;width:23px;padding-left:4px;"></div>
<div class="a sf" style="left:662px;width:180px;text-align:left;padding-left:152px">Celkem</div>
<div class="a" id="bluebar"></div><div class="a" id="wline"></div>
<div class="a" id="dlg">
<div class="a" id="dtitle"><div class="t" id="dtt">Hypertextový odkaz</div><div class="a" id="dclose"><svg width="19" height="19" viewBox="0 0 19 19" style="position:absolute;left:0;top:0"><path d="M5.500 5.500l8 8M13.500 5.500l-8 8" stroke="#fff" stroke-width="2.200" stroke-linecap="round"/></svg></div></div>
</div>
<div class="a" id="lpanel"></div>
<div class="a" id="selitem"></div>
<svg class="a" style="left:238px;top:237px" width="36" height="33" viewBox="0 0 36 33">
<rect x="2.500" y="1.500" width="26" height="21" rx="1.500" fill="#e9e9ee" stroke="#555"/>
<rect x="5" y="4" width="21" height="15.500" fill="#5a50d0" stroke="#15131f" stroke-width="1.600"/>
<rect x="6.500" y="5.500" width="1.500" height="1.500" fill="#fff"/>
<rect x="6" y="22" width="24" height="9" rx="4.500" fill="#fff" stroke="#222" stroke-width="1.300"/>
<circle cx="11" cy="26.500" r="2.600" fill="#ccc" stroke="#222"/><circle cx="18" cy="26.500" r="2.600" fill="#ccc" stroke="#222"/><circle cx="25" cy="26.500" r="2.600" fill="#ccc" stroke="#222"/>
<circle cx="26.500" cy="18.500" r="8.500" fill="#2f8e58" stroke="#1c5a6a" stroke-width=".8"/>
<path d="M20 14c3-3 8-4 11-1-2 1-3 3-5 3s-4-1-6-2zM22 22c2-2 5-1 6 1s3 1 4-1c0 3-4 5-7 4-1-1-2-2-3-4z" fill="#63e06a"/>
<path d="M28 13c2 1 4 3 4.500 6-1.500-1-3-1-4-3z" fill="#3a64d8"/>
</svg>
<svg class="a" style="left:240px;top:305px" width="36" height="36" viewBox="0 0 36 36">
<path d="M1.500 11l17-8.500 8 22-17 8.500z" fill="#fbf0c0" stroke="#8a7a50" stroke-width=".9"/>
<path d="M5 12.500l12-6M6 15.500l12-6M7 18.500l12-6M8 21.500l8-4" stroke="#8a7a50" stroke-width=".9"/>
<rect x="12.500" y="15.500" width="21" height="14" fill="#f4f6fb" stroke="#666"/>
<path d="M12.500 15.500l10.500 8.500 10.500-8.500M12.500 29.500l8-7.500M33.500 29.500l-8-7.500" fill="none" stroke="#888" stroke-width=".9"/>
</svg>
<svg class="a" style="left:238px;top:375px" width="38" height="35" viewBox="0 0 38 35">
<path d="M10.500 1.500h17l7 7v24.500h-24z" fill="#fff" stroke="#666"/>
<path d="M27.500 1.500v7h7" fill="#eee" stroke="#666"/>
<path d="M15 8.500h10M15 12.500h15M15 16.500h15M15 20.500h15M15 24.500h15M15 28h15" stroke="#888" stroke-width=".9"/>
<path d="M15 8.500h6M15 24.500h6" stroke="#4a4ad8" stroke-width="1.200"/>
<path d="M11 6C3 8 1 18 8 24" fill="none" stroke="#d01818" stroke-width="2.800"/>
<path d="M5 26.500l9 1.500-2-8z" fill="#d01818"/>
</svg>
<svg class="a" style="left:238px;top:445px" width="38" height="36" viewBox="0 0 38 36">
<path d="M10.500 2.500h17l7 7v24h-24z" fill="#fff" stroke="#666"/>
<path d="M27.500 2.500v7h7" fill="#eee" stroke="#666"/>
<path d="M16 15.500h14M16 19.500h14M16 23.500h14M16 27.500h14M16 31h14" stroke="#888" stroke-width=".9"/>
<path d="M11 2v16M3 10h16M5.500 4.500l11 11M16.500 4.500l-11 11" stroke="#d8c820" stroke-width="1.300"/>
<circle cx="11" cy="10" r="2.500" fill="#fdf8b0"/>
</svg>
<div class="t" style="left:202px;width:108px;text-align:center;top:273px;letter-spacing:0.2px">Internet</div>
<div class="t" style="left:202px;width:108px;text-align:center;top:343px;letter-spacing:-0.13px">Pošta a zprávy</div>
<div class="t" style="left:202px;width:108px;text-align:center;top:413px;letter-spacing:-0.35px">Dokument</div>
<div class="t" style="left:202px;width:108px;text-align:center;top:483px;letter-spacing:-0.23px">Nový dokument</div>
<div class="t" style="left:329px;top:238px">Typ hypertextového odkazu</div><div class="a gl" style="left:469px;top:243px;width:344px"></div>
<div class="t" style="left:328px;top:383px">Další nastavení</div><div class="a gl" style="left:407px;top:388px;width:406px"></div>
<svg class="a" style="left:439.5px;top:253.5px" width="13" height="13" viewBox="0 0 13 13"><defs><radialGradient id="rg446" cx=".35" cy=".35" r=".8"><stop offset="0" stop-color="#fff"/><stop offset=".6" stop-color="#f4f3ee"/><stop offset="1" stop-color="#d9d6c8"/></radialGradient></defs><circle cx="6.500" cy="6.500" r="5.800" fill="url(#rg446)" stroke="#2a4f80" stroke-width="1"/><circle cx="6.500" cy="6.500" r="2.500" fill="#2fb52f"/></svg><div class="t" style="left:457px;top:254px">Web</div>
<svg class="a" style="left:556.5px;top:253.5px" width="13" height="13" viewBox="0 0 13 13"><defs><radialGradient id="rg563" cx=".35" cy=".35" r=".8"><stop offset="0" stop-color="#fff"/><stop offset=".6" stop-color="#f4f3ee"/><stop offset="1" stop-color="#d9d6c8"/></radialGradient></defs><circle cx="6.500" cy="6.500" r="5.800" fill="url(#rg563)" stroke="#2a4f80" stroke-width="1"/></svg><div class="t" style="left:574px;top:254px">FTP</div>
<svg class="a" style="left:653.5px;top:253.5px" width="13" height="13" viewBox="0 0 13 13"><defs><radialGradient id="rg660" cx=".35" cy=".35" r=".8"><stop offset="0" stop-color="#fff"/><stop offset=".6" stop-color="#f4f3ee"/><stop offset="1" stop-color="#d9d6c8"/></radialGradient></defs><circle cx="6.500" cy="6.500" r="5.800" fill="url(#rg660)" stroke="#2a4f80" stroke-width="1"/></svg><div class="t" style="left:671px;top:254px">Telnet</div>
<div class="t" style="left:340px;top:275px">Cíl</div>
<div class="a combo" style="left:440px;top:273px;width:326px;height:21px"><div class="t" style="left:3px;top:4px"><span class="url" style="border-left:2px solid #000;margin-left:-1px">http://www.blue-point.cz/</span></div><div class="a cbtn" style="right:2px;top:2px;height:15px"><svg width="9" height="6" viewBox="0 0 9 6" style="position:absolute;left:2px;top:4px"><path d="M1 1l3.500 3.500L8 1" fill="none" stroke="#4d6185" stroke-width="2.200"/></svg></div></div>
<div class="t" style="left:340px;top:404px">Rámec</div>
<div class="a combo" style="left:440px;top:401px;width:111px;height:21px"><div class="t" style="left:3px;top:4px"></div><div class="a cbtn" style="right:2px;top:2px;height:15px"><svg width="9" height="6" viewBox="0 0 9 6" style="position:absolute;left:2px;top:4px"><path d="M1 1l3.500 3.500L8 1" fill="none" stroke="#4d6185" stroke-width="2.200"/></svg></div></div>
<div class="t" style="left:562px;top:404px">Formulář</div>
<div class="a combo" style="left:629px;top:401px;width:137px;height:21px"><div class="t" style="left:3px;top:4px"><span style="margin-left:-1px">Text</span></div><div class="a cbtn" style="right:2px;top:2px;height:15px"><svg width="9" height="6" viewBox="0 0 9 6" style="position:absolute;left:2px;top:4px"><path d="M1 1l3.500 3.500L8 1" fill="none" stroke="#4d6185" stroke-width="2.200"/></svg></div></div>
<div class="t" style="left:340px;top:433px">Text</div>
<div class="a combo" style="left:440px;top:430px;width:361px;height:20px"><div class="t url" style="left:3px;top:3px">http://www.blue-point.cz/</div></div>
<div class="t" style="left:340px;top:461px">Název</div>
<div class="a combo" style="left:440px;top:458px;width:361px;height:20px"></div>
<div class="a xbtn" style="left:776px;top:272px;width:25px;height:24px"><svg width="17" height="16" viewBox="0 0 17 16" style="position:absolute;left:3px;top:3px"><path d="M.5 14.500V2.500l1-1h4l1.500 1.500h8.500v11.500z" fill="#f7ef8c" stroke="#9a8a3a" stroke-width=".8"/><ellipse cx="8.500" cy="13.600" rx="4" ry="1.200" fill="#111"/><circle cx="8.500" cy="10" r="4" fill="#3a8a58" stroke="#123" stroke-width=".5"/><path d="M7 8c1-1.500 2.500-1.500 4-.5.500 1.500.5 3-1 4.500-1-.5-2-2-3-4z" fill="#3a5ad8"/></svg></div>
<div class="a xbtn" style="left:776px;top:301px;width:25px;height:24px"><svg width="17" height="16" viewBox="0 0 17 16" style="position:absolute;left:3px;top:3px"><circle cx="8.500" cy="8" r="6.800" fill="#5a50c8" stroke="#3a3390" stroke-width=".8"/><circle cx="8.500" cy="8" r="4" fill="#e02828"/><rect x="6.700" y="6.200" width="3.600" height="3.600" rx="1" fill="#f8d840"/></svg></div>
<div class="a xbtn dis" style="left:776px;top:399px;width:25px;height:24px"><svg width="17" height="16" viewBox="0 0 17 16" style="position:absolute;left:3px;top:3px"><path d="M.5 14.500V2.500l1-1h4l1.500 1.500h8.500v11.500z" fill="#a9a698"/><circle cx="9.500" cy="10" r="3" fill="none" stroke="#f0eee4" stroke-width="1.400" stroke-dasharray="1.500 1"/><path d="M2.500 5v8" stroke="#f0eee4"/></svg></div>
<div class="a xbtn dflt" style="left:414px;top:499px;width:96px;height:21px"><div class="t" style="left:0;width:94px;text-align:center;top:3px">Použít</div></div>
<div class="a xbtn" style="left:518px;top:499px;width:96px;height:21px"><div class="t" style="left:0;width:94px;text-align:center;top:3px">Zavřít</div></div>
<div class="a xbtn" style="left:622px;top:499px;width:96px;height:21px"><div class="t" style="left:0;width:94px;text-align:center;top:3px">Nápověda</div></div>
<div class="a xbtn" style="left:726px;top:499px;width:96px;height:21px"><div class="t" style="left:0;width:94px;text-align:center;top:3px"><u>Z</u>pět</div></div>
</body></html>
